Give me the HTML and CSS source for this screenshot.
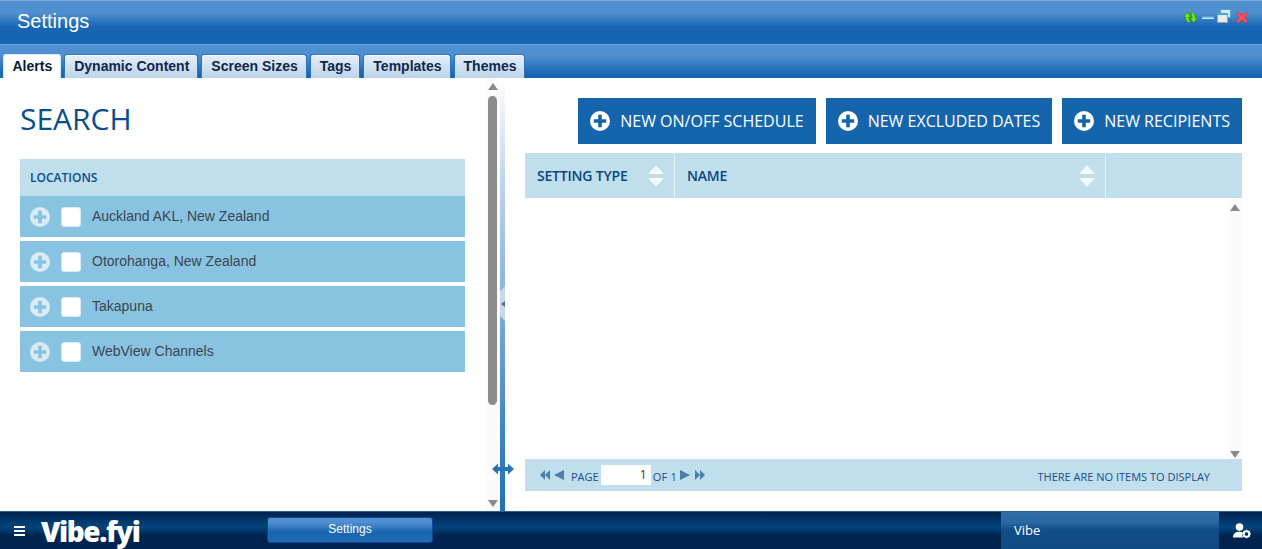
FILE: index.html
```html
<!DOCTYPE html>
<html lang="en">
<head>
<meta charset="utf-8">
<title>Settings</title>
<link rel="stylesheet" href="styles.css">
</head>
<body>
<svg class="defs" width="0" height="0" aria-hidden="true">
  <symbol id="plus" viewBox="0 0 20 20">
    <circle cx="10" cy="10" r="10" fill="currentColor"/>
    <path d="M8.200 3.800h3.600v4.400h4.400v3.600h-4.400v4.400H8.200v-4.400H3.800V8.200h4.400z" fill="var(--plus)"/>
  </symbol>
</svg>
<div class="app">
  <header class="titlebar">
    <h1 class="title">Settings</h1>
    <div class="window-controls">
      <svg width="15" height="14" viewBox="0 0 15 14"><path d="M.5 8L4.500 3 8 8H6c0 2 .5 3.500 1.500 5l-2 1c-2-1.500-3-3.500-3-6z" fill="#6fe01e" stroke="#1f8a18" stroke-width=".7"/><path transform="rotate(180 7.500 8.500)" d="M.5 8L4.500 3 8 8H6c0 2 .5 3.500 1.500 5l-2 1c-2-1.500-3-3.500-3-6z" fill="#6fe01e" stroke="#1f8a18" stroke-width=".7"/></svg>
      <svg width="12" height="14" viewBox="0 0 12 14"><rect x="0" y="7" width="12" height="3" fill="#d5dde5"/><rect x="0" y="7" width="12" height="1.500" fill="#3fa9dc"/></svg>
      <svg class="wc-restore" width="14" height="14" viewBox="0 0 14 14"><rect x="3.500" y=".5" width="10" height="8" fill="#dfe5ea" stroke="#3fa9dc"/><rect x=".5" y="4.500" width="10" height="9" fill="#e8ecef" stroke="#8fa4b5"/><rect x="0" y="4" width="11" height="2" fill="#3fa9dc"/></svg>
      <svg width="12" height="14" viewBox="0 0 12 14"><path d="M2 3l4 2.700L10 3l1.700 1.700L8.800 8.500l2.900 3.800L10 14 6 11.300 2 14 .3 12.300l2.900-3.800L.3 4.700z" fill="#f4505f" stroke="#c9304a" stroke-width=".6"/></svg>
    </div>
  </header>
  <nav class="tabs">
    <a class="tab active">Alerts</a>
    <a class="tab">Dynamic Content</a>
    <a class="tab">Screen Sizes</a>
    <a class="tab">Tags</a>
    <a class="tab">Templates</a>
    <a class="tab">Themes</a>
  </nav>
  <main class="content">
    <section class="left">
      <div class="left-body">
        <h2 class="search">SEARCH</h2>
        <div class="loc-head">LOCATIONS</div>
        <ul class="loc-list">
          <li class="loc"><svg class="loc-plus"><use href="#plus"/></svg><span class="check"></span><span class="loc-name">Auckland AKL, New Zealand</span></li>
          <li class="loc"><svg class="loc-plus"><use href="#plus"/></svg><span class="check"></span><span class="loc-name">Otorohanga, New Zealand</span></li>
          <li class="loc"><svg class="loc-plus"><use href="#plus"/></svg><span class="check"></span><span class="loc-name">Takapuna</span></li>
          <li class="loc"><svg class="loc-plus"><use href="#plus"/></svg><span class="check"></span><span class="loc-name">WebView Channels</span></li>
        </ul>
      </div>
      <div class="vscroll main-scroll">
        <span class="arrow-up"></span>
        <span class="thumb"></span>
        <span class="arrow-down"></span>
      </div>
    </section>
    <div class="splitter">
      <div class="grip"><span class="grip-arrow"></span></div>
      <svg class="resize" width="22" height="12" viewBox="0 0 22 12"><path d="M0 6l6-5.500v3.500h10V.5L22 6l-6 5.500V8H6v3.500z" fill="#2a72ba"/></svg>
    </div>
    <section class="right">
      <div class="actions">
        <button class="btn"><svg class="btn-plus"><use href="#plus"/></svg>NEW ON/OFF SCHEDULE</button>
        <button class="btn"><svg class="btn-plus"><use href="#plus"/></svg>NEW EXCLUDED DATES</button>
        <button class="btn"><svg class="btn-plus"><use href="#plus"/></svg>NEW RECIPIENTS</button>
      </div>
      <div class="thead">
        <div class="th th-type">SETTING TYPE<span class="sort"><i class="sort-up"></i><i class="sort-down"></i></span></div>
        <div class="th th-name">NAME<span class="sort"><i class="sort-up"></i><i class="sort-down"></i></span></div>
        <div class="th th-rest"></div>
      </div>
      <div class="tbody">
        <div class="vscroll grid-scroll"><span class="arrow-up"></span><span class="arrow-down"></span></div>
      </div>
      <div class="pager">
        <span class="pg-icon pg-double-left"><i></i><i></i></span>
        <span class="pg-icon pg-left"><i></i></span>
        <span class="pg-label">PAGE</span>
        <span class="pg-input">1</span>
        <span class="pg-of">OF 1</span>
        <span class="pg-icon pg-right"><i></i></span>
        <span class="pg-icon pg-double-right"><i></i><i></i></span>
        <span class="pg-status">THERE ARE NO ITEMS TO DISPLAY</span>
      </div>
    </section>
  </main>
  <footer class="taskbar">
    <span class="menu"><i></i><i></i><i></i></span>
    <span class="logo">Vibe.fyi</span>
    <button class="task">Settings</button>
    <div class="vibe">Vibe</div>
    <div class="user">
      <svg width="18" height="16" viewBox="0 0 18 16"><circle cx="6.500" cy="4" r="3.800" fill="#fff"/><path d="M0 14.500c0-4 2.500-5.800 6.500-5.800 1.300 0 2.400.2 3.300.6a5 5 0 0 0 .2 5.200z" fill="#fff"/><circle cx="13.500" cy="11" r="2.800" fill="none" stroke="#fff" stroke-width="1.900"/><path d="M13.500 6.800v1.400M13.500 13.800v1.400M9.300 11h1.400M16.300 11h1.400M10.500 8l1 1M15.500 13l1 1M16.500 8l-1 1M11.500 13l-1 1" stroke="#fff" stroke-width="1.400"/></svg>
    </div>
  </footer>
</div>
</body>
</html>
```
FILE: styles.css
```css
* { box-sizing: border-box; }
html, body { margin: 0; height: 100%; overflow: hidden; }
body { font-family: "Liberation Sans", Arial, sans-serif; background: #fff; --plus: #fff; }
.defs { position: absolute; }
.app { display: flex; flex-direction: column; width: 1262px; height: 549px; }

.titlebar {
  flex: 0 0 45px; display: flex; align-items: flex-start; justify-content: space-between;
  padding: 0 14px 0 17px; border-top: 1px solid #7aa9d8; border-bottom: 1px solid #6fa3d6;
  background: linear-gradient(#5190d0 0, #5190d0 12px, #1565b2 26px, #1565b2 100%);
}
.title { margin: 9px 0 0; font-size: 20px; line-height: 23px; font-weight: 400; color: #fff; }
.window-controls { display: flex; gap: 4px; margin-top: 8px; align-items: flex-start; }
.wc-restore { margin: 0 1px 0 -1px; }

.tabs {
  flex: 0 0 33px; display: flex; align-items: flex-end; gap: 3px; padding-left: 2.500px;
  background: linear-gradient(#5190d0 0, #5190d0 10px, #1565b2 30px);
}
.tab {
  display: block; height: 24px; padding: 3px 8px 0 9px; font-size: 14px; line-height: 16px; font-weight: 700;
  color: #10264d; border: 1px solid #2d74c0; border-bottom: 0; border-radius: 3px 3px 0 0;
  background: linear-gradient(#e6eff8, #bcd4ea);
  box-shadow: inset 0 1px 0 #fff;
}
.tab.active { background: #fff; color: #071a38; border-color: #dbe8f4; }

.content { flex: 1 1 auto; display: flex; min-height: 0; background: #fff; }
.left { flex: 0 0 500px; display: flex; }
.left-body { flex: 0 0 486px; padding: 0 21px 0 20px; }
.search { margin: 22px 0 0; height: 59px; font: 400 30px/37px "Open Sans", sans-serif; color: #0a4d8c; }
.loc-head {
  height: 37px; padding: 0 10px; background: #c0deeb; color: #0a4d8c;
  font: 600 12px/37px "Open Sans", sans-serif;
}
.loc-list { margin: 0; padding: 0; list-style: none; display: flex; flex-direction: column; gap: 4px; }
.loc {
  height: 41px; display: flex; align-items: center; padding-left: 10px; background: #89c3e2;
  color: #3c4650; font-size: 14px; --plus: #89c3e2;
}
.loc-name { margin-bottom: 2px; }
.loc-plus { width: 20px; height: 20px; color: #d9ebf5; }
.check { width: 20px; height: 20px; margin: 0 11px; background: #fff; border: 1px solid #d9ebf5; border-radius: 3px; }

.vscroll { display: flex; flex-direction: column; align-items: center; }
.main-scroll { flex: 0 0 13px; padding: 5px 0 4px; background: #fbfbfc; }
.arrow-up { width: 0; height: 0; border: 5px solid transparent; border-top: 0; border-bottom: 7px solid #8a8a8a; flex: none; }
.arrow-down { width: 0; height: 0; border: 5px solid transparent; border-bottom: 0; border-top: 7px solid #8a8a8a; flex: none; margin-top: auto; }
.thumb { width: 9px; height: 309px; margin-top: 6px; background: #8c8c8c; border-radius: 5px; }

.splitter {
  flex: 0 0 5px; position: relative;
  background: linear-gradient(#fff 0, #c5d9ef 90px, #8ab3de 210px, #4a8aca 330px, #1f6fb8 100%);
}
.grip {
  position: absolute; left: 0; top: 208px; width: 5px; height: 35px; background: #c7d6ea;
  clip-path: polygon(100% 0, 100% 100%, 0 85%, 0 15%);
  display: flex; align-items: center; justify-content: center;
}
.grip-arrow { width: 0; height: 0; border: 3px solid transparent; border-left: 0; border-right: 4px solid #4a6f9c; }
.resize { position: absolute; left: -8px; top: 385px; }

.right { flex: 1 1 auto; padding: 20px 20px 0 20px; display: flex; flex-direction: column; min-width: 0; }
.actions { display: flex; justify-content: flex-end; gap: 10px; height: 46px; }
.btn {
  display: flex; align-items: center; gap: 10px; height: 46px; padding: 0 12px; border: 0;
  background: #1565ad; color: #fff; font: 400 16px "Open Sans", sans-serif; --plus: #1565ad;
}
.btn-plus { width: 20px; height: 20px; color: #fff; flex: none; }

.thead { display: flex; height: 45px; margin-top: 9px; background: #c0deeb; }
.th {
  display: flex; align-items: center; justify-content: space-between; padding: 0 10px 0 12px;
  color: #0a4680; font: 600 14px "Open Sans", sans-serif; letter-spacing: -.2px; border-right: 1px solid #e6f1f7;
}
.th-type { flex: 0 0 150px; }
.th-name { flex: 0 0 431px; }
.th-rest { flex: 1; border: 0; }
.sort { display: flex; flex-direction: column; gap: 4px; }
.sort i { display: block; width: 0; height: 0; border: 8px solid transparent; }
.sort .sort-up { border-top: 0; border-bottom: 9px solid #f5fafc; }
.sort .sort-down { border-bottom: 0; border-top: 9px solid #f5fafc; }

.tbody { flex: 0 0 261px; display: flex; justify-content: flex-end; }
.grid-scroll { flex: 0 0 14px; padding: 6px 0 1px; background: #fbfbfc; }

.pager {
  height: 32px; display: flex; align-items: center; padding: 0 32px 0 15px; background: #c0deeb;
  color: #1b4d8e; font: 400 11px "Open Sans", sans-serif;
}
.pg-icon { display: flex; }
.pg-icon i { display: block; width: 0; height: 0; border-top: 5.500px solid transparent; border-bottom: 5.500px solid transparent; }
.pg-double-left i { border-right: 5.500px solid #4a7fae; }
.pg-double-right i { border-left: 5.500px solid #4a7fae; }
.pg-left i { border-right: 10px solid #4a7fae; }
.pg-right i { border-left: 10px solid #4a7fae; }
.pg-double-left { margin-right: 4px; }
.pg-left { margin-right: 7px; }
.pg-label, .pg-of { margin-top: 2px; }
.pg-of { letter-spacing: .2px; }
.pg-input { width: 50px; height: 20px; margin: 0 2px; padding-right: 4px; background: #fff; color: #333; text-align: right; font-size: 12px; line-height: 20px; }
.pg-right { margin: 0 5px 0 3px; }
.pg-status { margin: 3px 0 0 auto; }

.taskbar {
  flex: 0 0 38px; display: flex; align-items: center; color: #fff; border-top: 1px solid #2d5f96;
  background: linear-gradient(#00234f 0, #014279 14px, #014279 16px, #002350 24px, #002350 100%);
}
.menu { display: flex; flex-direction: column; gap: 2px; margin-left: 14px; width: 11px; }
.menu i { display: block; height: 2px; background: #fff; }
.logo { margin-left: 16px; width: 226px; font: 800 28px/30px "Open Sans", sans-serif; letter-spacing: -1.400px; }
.task {
  width: 166px; height: 26px; margin-top: -1px; padding: 0 0 2px; border: 1px solid #0c4c8e; border-radius: 3px; color: #fff; font: 400 12px "Liberation Sans", sans-serif;
  background: linear-gradient(#5190d0 0, #5190d0 4px, #1a64b0 14px, #1e69b4 100%);
}
.vibe {
  margin-left: auto; width: 218px; height: 100%; padding-left: 13px; font: 400 13px/37px "Open Sans", sans-serif;
  background: linear-gradient(#2f6ea8 0, #2a69a3 10px, #114d89 18px, #104a85 100%);
}
.user { width: 43px; display: flex; justify-content: center; padding-left: 2px; }
```
